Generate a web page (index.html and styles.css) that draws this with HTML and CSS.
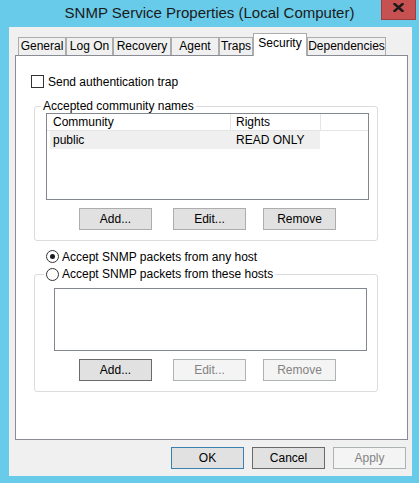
FILE: index.html
```html
<!DOCTYPE html>
<html>
<head>
<meta charset="utf-8">
<link rel="stylesheet" href="styles.css">
</head>
<body>
<div class="window">
  <div class="titlebar">
    <span class="tb-spacer"></span>
    <div class="title">SNMP Service Properties (Local Computer)</div>
    <div class="close">
      <svg width="11" height="9" viewBox="0 0 11 9"><path d="M1.5 1 L9.5 8 M9.5 1 L1.5 8" stroke="#1a1a1a" stroke-width="2.4" stroke-linecap="square" fill="none"/></svg>
    </div>
  </div>
  <div class="client">
    <div class="tabs">
      <div class="tab t-general">General</div>
      <div class="tab t-logon">Log On</div>
      <div class="tab t-recovery">Recovery</div>
      <div class="tab t-agent">Agent</div>
      <div class="tab t-traps">Traps</div>
      <div class="tab t-security selected">Security</div>
      <div class="tab t-deps">Dependencies</div>
    </div>
    <div class="panel">
      <div class="check-row"><span class="checkbox"></span><span>Send authentication trap</span></div>
      <fieldset class="group g1">
        <legend class="legend-text">Accepted community names</legend>
        <div class="listview">
          <div class="lv-header">
            <div class="lv-h h1">Community</div>
            <div class="lv-h h2">Rights</div>
          </div>
          <div class="lv-row">
            <div class="lv-c c1">public</div>
            <div class="lv-c c2">READ ONLY</div>
          </div>
        </div>
        <div class="btn-row">
          <button class="btn first">Add...</button>
          <button class="btn">Edit...</button>
          <button class="btn">Remove</button>
        </div>
      </fieldset>
      <div class="radio-row"><span class="radio checked"></span><span>Accept SNMP packets from any host</span></div>
      <fieldset class="group g2">
        <legend class="legend-radio"><span class="radio"></span><span class="lr-text">Accept SNMP packets from these hosts</span></legend>
        <div class="listbox"></div>
        <div class="btn-row">
          <button class="btn first focus">Add...</button>
          <button class="btn" disabled>Edit...</button>
          <button class="btn" disabled>Remove</button>
        </div>
      </fieldset>
    </div>
    <div class="dialog-buttons">
      <button class="btn default">OK</button>
      <button class="btn focus">Cancel</button>
      <button class="btn" disabled>Apply</button>
    </div>
  </div>
</div>
</body>
</html>
```

FILE: styles.css
```css
html, body {
  margin: 0;
  padding: 0;
}
body {
  width: 419px;
  height: 483px;
  overflow: hidden;
  background: #69cbea;
  font-family: "Liberation Sans", Arial, sans-serif;
  font-size: 12px;
  color: #000;
}
.window {
  height: 483px;
  display: flex;
  flex-direction: column;
}
.titlebar {
  height: 27px;
  display: grid;
  grid-template-columns: 1fr auto 1fr;
  align-items: start;
}
.title {
  font-size: 15px;
  line-height: 26px;
  color: #1b1b1b;
  white-space: nowrap;
}
.close {
  justify-self: end;
  margin-right: 3px;
  width: 35px;
  height: 20px;
  box-sizing: border-box;
  background: #c75050;
  border: 1px solid #a03c3c;
  border-top: none;
  display: flex;
  align-items: center;
  justify-content: center;
  padding-bottom: 5px;
}
.client {
  margin: 0 7px 0 9px;
  height: 449px;
  background: #f0f0f0;
  display: flex;
  flex-direction: column;
}
.tabs {
  display: flex;
  align-items: flex-end;
  height: 22px;
  margin: 6px 0 0 9px;
}
.tab {
  height: 18px;
  box-sizing: border-box;
  border: 1px solid #acacac;
  border-bottom: none;
  background: #f0f0f0;
  text-align: center;
  line-height: 16px;
  white-space: nowrap;
}
.tab.selected {
  height: 23px;
  margin-bottom: -1px;
  background: #fff;
  line-height: 18px;
  position: relative;
  z-index: 2;
}
.t-general { width: 48px; }
.t-logon { width: 47px; }
.t-recovery { width: 58px; }
.t-agent { width: 48px; }
.t-traps { width: 34px; }
.t-security { width: 54px; }
.t-deps { width: 79px; }

.panel {
  margin-left: 6px;
  width: 393px;
  height: 385px;
  box-sizing: border-box;
  border: 1px solid #898c95;
  background: #fff;
  display: flex;
  flex-direction: column;
  align-items: flex-start;
}
.check-row {
  display: flex;
  align-items: center;
  gap: 4px;
  height: 13px;
  margin: 19px 0 0 15px;
}
.checkbox {
  width: 13px;
  height: 13px;
  box-sizing: border-box;
  border: 1px solid #333;
  background: #fff;
}
.group {
  margin: 11px 0 0 18px;
  width: 344px;
  box-sizing: border-box;
  padding: 0 0 10px 0;
  border: 1px solid #dcdcdc;
  border-radius: 3px;
}
.group legend {
  padding: 0 2px;
  height: 14px;
  line-height: 14px;
}
.legend-text {
  margin-left: 6px;
}
.legend-radio {
  margin-left: 9px;
  display: flex;
  align-items: center;
  gap: 3px;
}
.g2 {
  margin-top: 4px;
}
.listview {
  margin-left: 11px;
  width: 323px;
  height: 87px;
  box-sizing: border-box;
  border: 1px solid #828790;
  background: #fff;
}
.lv-header {
  display: flex;
  height: 17px;
  box-sizing: border-box;
  border-bottom: 1px solid #e5e5e5;
}
.lv-h {
  box-sizing: border-box;
  border-right: 1px solid #e5e5e5;
  line-height: 16px;
}
.h1 { width: 184px; padding-left: 6px; }
.h2 { width: 90px; padding-left: 5px; }
.lv-row {
  display: flex;
  margin-left: 3px;
  width: 270px;
  height: 18px;
  line-height: 18px;
  background: #efefef;
}
.c1 { width: 180px; padding-left: 3px; box-sizing: border-box; }
.c2 { padding-left: 6px; }
.listbox {
  margin: 7px 0 0 19px;
  width: 313px;
  height: 63px;
  box-sizing: border-box;
  border: 1px solid #828790;
  background: #fff;
}
.btn-row {
  display: flex;
  gap: 17px;
  margin-top: 8px;
  padding-left: 44px;
}
.btn-row .first {
  margin-right: 4px;
}
.btn {
  width: 73px;
  height: 22px;
  box-sizing: border-box;
  border: 1px solid #adadad;
  background: #e1e1e1;
  font-family: inherit;
  font-size: 12px;
  color: #000;
  padding: 0;
  margin: 0;
  line-height: 18px;
}
.btn.focus {
  border-color: #6a6a6a;
}
.btn.default {
  border-color: #3c7fb1;
}
.btn:disabled {
  background: #f4f4f4;
  border-color: #adb2b5;
  color: #838383;
}
.radio-row {
  display: flex;
  align-items: center;
  gap: 3px;
  height: 13px;
  margin: 9px 0 0 30px;
}
.radio {
  width: 13px;
  height: 13px;
  box-sizing: border-box;
  border: 1px solid #333;
  border-radius: 50%;
  background: #fff;
  display: flex;
  align-items: center;
  justify-content: center;
  flex: none;
}
.radio.checked::after {
  content: "";
  width: 5px;
  height: 5px;
  border-radius: 50%;
  background: #1a1a1a;
}
.dialog-buttons {
  display: flex;
  justify-content: flex-end;
  gap: 8px;
  margin-top: 7px;
  padding-right: 6px;
}
```
